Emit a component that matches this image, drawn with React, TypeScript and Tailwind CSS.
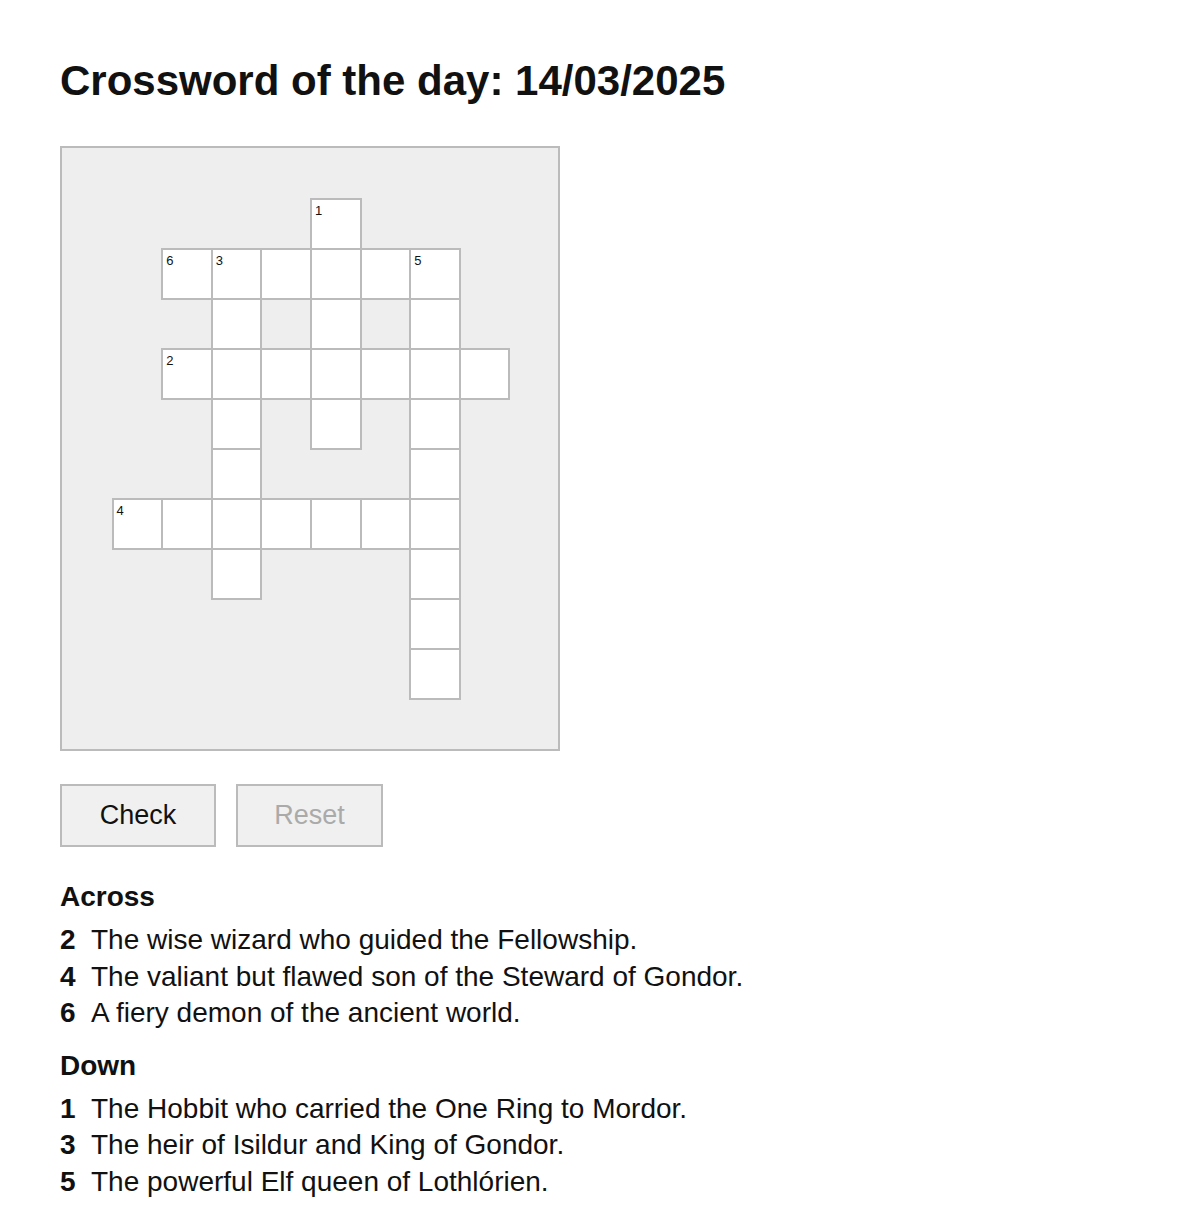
import React from "react";

const ROWS = 12;
const COLS = 10;

type Cell = { n?: string };

const filled: Record<string, Cell> = {};
function add(r: number, c: number, n?: string) {
  filled[`${r}-${c}`] = { n };
}
add(1, 5, "1");
add(2, 2, "6");
add(2, 3, "3");
add(2, 4);
add(2, 5);
add(2, 6);
add(2, 7, "5");
add(3, 3);
add(3, 5);
add(3, 7);
add(4, 2, "2");
for (let c = 3; c <= 8; c++) add(4, c);
add(5, 3);
add(5, 5);
add(5, 7);
add(6, 3);
add(6, 7);
add(7, 1, "4");
for (let c = 2; c <= 7; c++) add(7, c);
add(8, 3);
add(8, 7);
add(9, 7);
add(10, 7);

const across = [
  ["2", "The wise wizard who guided the Fellowship."],
  ["4", "The valiant but flawed son of the Steward of Gondor."],
  ["6", "A fiery demon of the ancient world."],
];
const down = [
  ["1", "The Hobbit who carried the One Ring to Mordor."],
  ["3", "The heir of Isildur and King of Gondor."],
  ["5", "The powerful Elf queen of Lothlórien."],
];

function ClueList({ title, items }: { title: string; items: string[][] }) {
  return (
    <div>
      <h2 className="text-[28px] leading-[32px] font-bold mb-[9px]">{title}</h2>
      <ul>
        {items.map(([n, t]) => (
          <li key={n} className="flex text-[28px] leading-[36.5px]">
            <span className="w-[31px] shrink-0 font-bold">{n}</span>
            <span>{t}</span>
          </li>
        ))}
      </ul>
    </div>
  );
}

export default function App() {
  const cells: React.ReactNode[] = [];
  for (let r = 0; r < ROWS; r++) {
    for (let c = 0; c < COLS; c++) {
      const cell = filled[`${r}-${c}`];
      if (cell) {
        cells.push(
          <div
            key={`${r}-${c}`}
            className="relative bg-white border-2 border-[#bbbbbb] -mr-[2px] -mb-[2px]"
          >
            {cell.n && (
              <span className="absolute left-[3px] top-[3px] text-[13px] leading-[15px] text-[#111]">
                {cell.n}
              </span>
            )}
          </div>
        );
      } else {
        cells.push(<div key={`${r}-${c}`} />);
      }
    }
  }

  return (
    <div
      className="min-h-[1220px] bg-white text-[#111] px-[60px] pt-[58px]"
      style={{ fontFamily: '"Liberation Sans", Arial, Helvetica, sans-serif' }}
    >
      <h1 className="text-[42px] leading-[46px] font-bold">Crossword of the day: 14/03/2025</h1>

      <div className="mt-[42px] w-[500px] border-2 border-[#bbbbbb] bg-[#eeeeee] pb-[1px]">
        <div className="grid grid-cols-10 grid-rows-[repeat(12,50px)]">{cells}</div>
      </div>

      <div className="mt-[33px] flex gap-[20px]">
        <button className="w-[156px] h-[63px] border-2 border-[#bbbbbb] bg-[#f0f0f0] text-[27px] text-[#111]">
          Check
        </button>
        <button className="w-[147px] h-[63px] border-2 border-[#bbbbbb] bg-[#f0f0f0] text-[27px] text-[#aaaaaa]">
          Reset
        </button>
      </div>

      <div className="mt-[34px]">
        <ClueList title="Across" items={across} />
      </div>
      <div className="mt-[18px]">
        <ClueList title="Down" items={down} />
      </div>
    </div>
  );
}
